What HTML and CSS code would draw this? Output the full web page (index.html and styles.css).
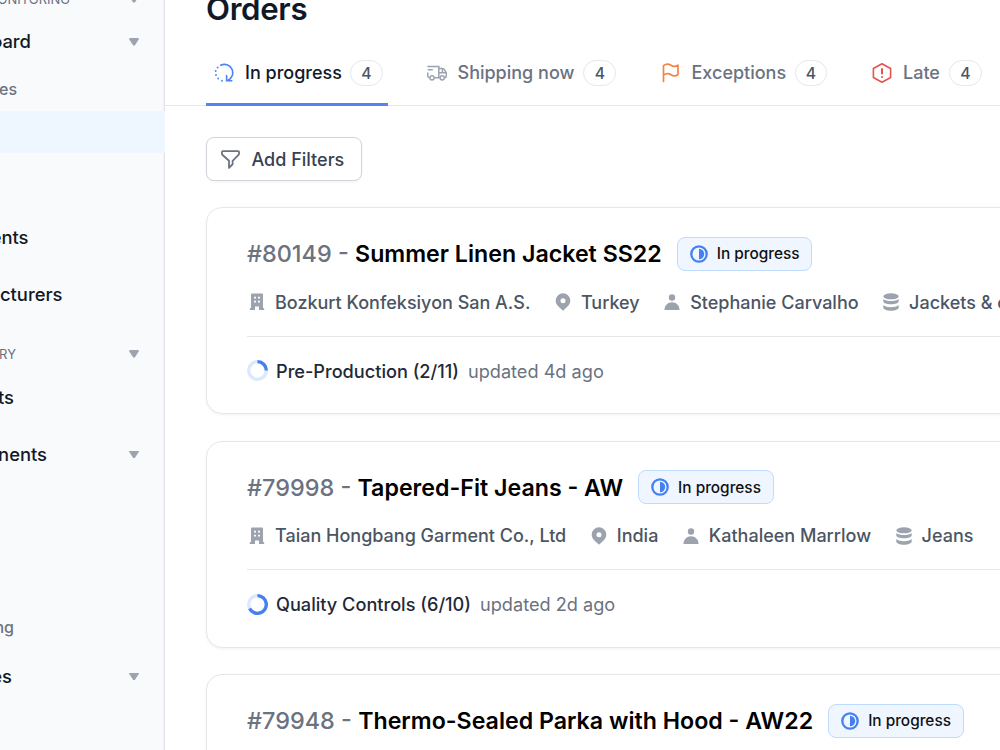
FILE: index.html
```
<!DOCTYPE html>
<html lang="en">
<head>
<meta charset="utf-8">
<title>Orders</title>
<link rel="stylesheet" href="styles.css">
</head>
<body>
<svg width="0" height="0" class="defs">
  <symbol id="building" viewBox="0 0 16 18"><path fill="currentColor" fill-rule="evenodd" d="M3 .5h10a1 1 0 0 1 1 1V15h.4a.8.8 0 0 1 .8.8V17H10v-3.400H6V17H.8v-1.200a.8.8 0 0 1 .8-.8H2V1.500a1 1 0 0 1 1-1ZM5 3.700v1.900h2v-1.900Zm4 0v1.900h2v-1.900ZM5 7.700v1.900h2v-1.900Zm4 0v1.900h2v-1.900Z"/></symbol>
  <symbol id="pin" viewBox="0 0 16 18"><path fill="currentColor" fill-rule="evenodd" d="M8 .3a7.300 7.300 0 0 1 7.300 7.300c0 4-3 6.300-5.200 8.100L8 17.700l-2.100-2C3.700 13.900.7 11.600.7 7.600A7.300 7.300 0 0 1 8 .3Zm0 4.900a2.500 2.500 0 1 0 0 5 2.500 2.500 0 0 0 0-5Z"/></symbol>
  <symbol id="person" viewBox="0 0 16 18"><circle cx="8" cy="4.500" r="3.200" fill="currentColor"/><path fill="currentColor" d="M.5 17C.5 12.500 3.800 9.300 8 9.300s7.500 3.200 7.500 7.700Z"/></symbol>
  <symbol id="stack" viewBox="0 0 16 18"><g fill="currentColor"><ellipse cx="8" cy="3.300" rx="7.700" ry="3"/><path d="M.3 6c1.700 1.500 4.500 2 7.700 2s6-.5 7.700-2v2.200c0 1.700-3.400 3-7.700 3S.3 9.900.3 8.200Z"/><path d="M.3 12.100c1.700 1.500 4.500 2.200 7.700 2.200s6-.7 7.700-2.200v2.400c0 1.800-3.400 3.200-7.700 3.200S.3 16.300.3 14.500Z"/></g></symbol>
  <symbol id="half" viewBox="0 0 18 18"><circle cx="9" cy="9" r="7.700" fill="none" stroke="currentColor" stroke-width="2.300"/><path fill="currentColor" d="M9 3.800a5.200 5.200 0 0 1 0 10.400Z"/></symbol>
</svg>
<div class="app">
  <aside class="sidebar">
    <div class="row section first"><span class="label l70">ONITORING</span><i class="caret"></i></div>
    <div class="row dash"><span class="label l31">oard</span><i class="caret"></i></div>
    <div class="row sub"><span class="label l17">es</span></div>
    <div class="row active"></div>
    <div class="row ship"><span class="label l28">ents</span></div>
    <div class="row"><span class="label l62">acturers</span></div>
    <div class="row section second"><span class="label l16">RY</span><i class="caret"></i></div>
    <div class="row products"><span class="label l14">ts</span></div>
    <div class="row"><span class="label l47">nents</span><i class="caret"></i></div>
    <div class="row sub late"><span class="label l14">ng</span></div>
    <div class="row last"><span class="label l12">es</span><i class="caret"></i></div>
  </aside>
  <main class="main">
    <header class="head">
      <h1 class="title">Orders</h1>
      <nav class="tabs">
        <div class="tab current t1">
          <svg class="ti" viewBox="0 0 20 20" fill="none" stroke="#4d83f3" stroke-width="1.600" stroke-linecap="round"><path d="M6.700 2.200A8.300 8.300 0 0 1 14 17.300M12.600 12.500v5.300h5.200"/><path stroke-width="1.900" d="M3.600 4.500h.01M1.700 8h.01M2 12h.01M4.200 15.500h.01M8 17.700h.01"/></svg>
          <span class="tt">In progress</span><span class="count">4</span>
        </div>
        <div class="tab t2">
          <svg class="ti" viewBox="0 0 20 20" fill="none" stroke="#9ca3af" stroke-width="1.500"><path d="M.3 3.400h11.500v11.300M.8 6.700h5M.8 9.500v3.500c0 1.100.6 1.700 1.700 1.700M7.400 14.700h5.500M11.800 5.500h3.700c1 0 1.600.4 2.100 1.300l1.700 3v3c0 1.200-.6 1.900-1.700 1.900M11.800 9.800h7.500M15.400 5.500v4.300"/><circle cx="5" cy="14.800" r="2.100"/><circle cx="15.200" cy="14.800" r="2.100"/></svg>
          <span class="tt">Shipping now</span><span class="count">4</span>
        </div>
        <div class="tab t3">
          <svg class="ti" viewBox="0 0 20 20" fill="none" stroke="#f58444" stroke-width="1.700" stroke-linecap="round" stroke-linejoin="round"><path d="M2.500 18.500V2.700C5.500.1 8 .9 10 2.300s4.500 1.600 7-.2v9.400c-2.500 2-5 1.600-7 .2s-4.500-1.800-7.500.5"/></svg>
          <span class="tt">Exceptions</span><span class="count">4</span>
        </div>
        <div class="tab t4">
          <svg class="ti" viewBox="0 0 20 20" fill="none" stroke="#e5534e" stroke-width="1.600" stroke-linejoin="round"><path d="M10 .8l8.600 4.700v9L10 19.200l-8.600-4.700v-9Z"/><path stroke-width="2" stroke-linecap="round" d="M10 6v4.500M10 14h.01"/></svg>
          <span class="tt">Late</span><span class="count">4</span>
        </div>
      </nav>
    </header>
    <button class="filter"><svg class="fi" viewBox="0 0 18 18" fill="none" stroke="#6b7280" stroke-width="1.700" stroke-linejoin="round"><path d="M1.800 1h14.400a.9.900 0 0 1 .9.900v1.500c0 .5-.2.900-.5 1.300L11 10.200v3.300L7.600 17v-6.800L1.500 4.700a1.700 1.700 0 0 1-.6-1.300V1.900a.9.900 0 0 1 .9-.9Z"/></svg>Add Filters</button>
    <section class="cards">
      <article class="card">
        <div class="top"><h2 class="name"><span class="id">#80149 - </span>Summer Linen Jacket SS22</h2><span class="status"><svg class="si"><use href="#half"/></svg>In progress</span></div>
        <div class="meta">
          <span class="m"><svg class="mi"><use href="#building"/></svg>Bozkurt Konfeksiyon San A.S.</span>
          <span class="m"><svg class="mi"><use href="#pin"/></svg>Turkey</span>
          <span class="m"><svg class="mi"><use href="#person"/></svg>Stephanie Carvalho</span>
          <span class="m"><svg class="mi"><use href="#stack"/></svg>Jackets &amp; coats</span>
        </div>
        <div class="stage"><svg class="ring" viewBox="0 0 20 20" fill="none" stroke-width="3.200"><circle cx="10" cy="10" r="8.400" stroke="#dbe9fe"/><path stroke="#4480f2" d="M10 1.600A8.400 8.400 0 0 1 18.400 10"/></svg><b class="step">Pre-Production (2/11)</b><span class="ago">updated 4d ago</span></div>
      </article>
      <article class="card">
        <div class="top"><h2 class="name"><span class="id">#79998 - </span>Tapered-Fit Jeans - AW</h2><span class="status"><svg class="si"><use href="#half"/></svg>In progress</span></div>
        <div class="meta">
          <span class="m"><svg class="mi"><use href="#building"/></svg>Taian Hongbang Garment Co., Ltd</span>
          <span class="m"><svg class="mi"><use href="#pin"/></svg>India</span>
          <span class="m"><svg class="mi"><use href="#person"/></svg>Kathaleen Marrlow</span>
          <span class="m"><svg class="mi"><use href="#stack"/></svg>Jeans</span>
        </div>
        <div class="stage"><svg class="ring" viewBox="0 0 20 20" fill="none" stroke-width="3.200"><circle cx="10" cy="10" r="8.400" stroke="#dbe9fe"/><path stroke="#4480f2" d="M10 1.600A8.400 8.400 0 1 1 2.500 13.800"/></svg><b class="step">Quality Controls (6/10)</b><span class="ago">updated 2d ago</span></div>
      </article>
      <article class="card">
        <div class="top"><h2 class="name"><span class="id">#79948 - </span>Thermo-Sealed Parka with Hood - AW22</h2><span class="status"><svg class="si"><use href="#half"/></svg>In progress</span></div>
      </article>
    </section>
  </main>
</div>
</body>
</html>
```
FILE: styles.css
```
* { box-sizing: border-box; }
body { margin: 0; background: #fff; font-family: Inter, "Liberation Sans", sans-serif; font-size: 18px; font-weight: 500; color: #111827; overflow: hidden; }
.defs { display: block; height: 0; }
.app { display: flex; width: 1000px; height: 750px; overflow: hidden; }
.sidebar { width: 165px; flex: none; background: #f9fafc; box-shadow: inset -1.500px 0 #e5e7eb; font-size: 18.400px; }
.row { display: flex; align-items: center; justify-content: space-between; height: 57px; padding-right: 26px; }
.label { display: flex; justify-content: flex-end; padding-bottom: 1.500px; white-space: nowrap; }
.l70 { width: 70px; } .l62 { width: 62.500px; } .l47 { width: 47px; } .l31 { width: 31px; } .l28 { width: 28.500px; }
.l17 { width: 17px; } .l16 { width: 16px; } .l14 { width: 14px; } .l12 { width: 12px; }
.section { height: 32px; font-size: 13px; color: #6b7280; font-weight: 400; }
.section .label { padding-bottom: 0; }
.first { height: 24px; margin-top: -13px; }
.dash { height: 62px; }
.sub { height: 34px; font-size: 16px; color: #6b7280; }
.active { height: 42px; margin-top: 4px; background: #eef6ff; }
.ship { margin-top: 56px; }
.second { margin-top: 15px; }
.products { height: 56px; }
.late { margin-top: 128px; }
.last { margin-top: 3px; }
.caret { width: 10px; height: 8px; background: #9ca3af; clip-path: polygon(8% 0, 92% 0, 100% 14%, 58% 94%, 42% 94%, 0 14%); }
.main { flex: none; width: 900px; }
.head { display: flow-root; height: 106px; padding-left: 41px; border-bottom: 1.500px solid #e5e7eb; }
.title { margin: -11px 0 0; height: 51px; line-height: 40px; font-size: 31.200px; font-weight: 600; letter-spacing: -0.300px; }
.tabs { display: flex; }
.tab { display: flex; align-items: center; flex: none; height: 66px; padding-left: 8px; color: #6b7280; white-space: nowrap; }
.current { color: #111827; border-bottom: 3px solid #4f86f4; padding-top: 3px; }
.t1 { width: 182px; margin-right: 30.500px; } .t2 { width: 198px; margin-right: 36px; } .t3 { width: 174px; margin-right: 37.500px; } .t4 { width: 130px; }
.tt { padding-bottom: 1px; }
.ti { width: 20px; height: 20px; flex: none; margin-right: 11px; }
.count { display: flex; align-items: center; justify-content: center; width: 33px; height: 26px; margin-left: 9px; border: 1.500px solid #e5e7eb; border-radius: 13px; font-size: 15.700px; color: #4b5563; }
.t1 .count { margin-left: 8px; }
.filter { display: flex; align-items: center; width: 156px; height: 44px; margin: 31px 0 0 41px; padding: 0 0 0 14px; border: 1.500px solid #d1d5db; border-radius: 8px; background: #fff; box-shadow: 0 1px 3px rgba(0,0,0,.06); font: inherit; color: #374151; white-space: nowrap; }
.fi { width: 19px; height: 19px; margin-right: 11.500px; }
.cards { display: grid; gap: 26.500px; margin: 26px 0 0 41px; }
.card { height: 207px; padding: 28.500px 0 0 40px; border: 1.500px solid #e5e7eb; border-radius: 16px; box-shadow: 0 1px 3px rgba(0,0,0,.06); }
.top { display: flex; align-items: center; height: 34px; }
.name { margin: 0 15px 0 0; font-size: 23.200px; font-weight: 600; color: #000; white-space: nowrap; }
.id { font-size: 23.450px; font-weight: 500; color: #6b7280; }
.status { display: flex; align-items: center; width: 135.500px; height: 34px; padding-left: 12px; border: 1.500px solid #bfdbfe; border-radius: 8px; background: #eff6ff; font-size: 15.400px; color: #111; white-space: nowrap; }
.si { width: 18px; height: 18px; margin-right: 9px; color: #4480f2; }
.meta { display: flex; gap: 22.500px; height: 66px; padding-bottom: 1.500px; border-bottom: 1.500px solid #e5e7eb; font-size: 18px; color: #4b5563; white-space: nowrap; }
.m { display: flex; align-items: center; }
.mi { width: 16px; height: 18px; margin: 0 10px 0 2px; color: #9ca3af; }
.stage { display: flex; align-items: center; height: 68px; font-size: 18.150px; white-space: nowrap; }
.ring { width: 21px; height: 21px; margin-right: 8px; }
.step { font-weight: 500; color: #1f2937; }
.ago { margin-left: 9px; font-weight: 400; color: #6b7280; }
```
